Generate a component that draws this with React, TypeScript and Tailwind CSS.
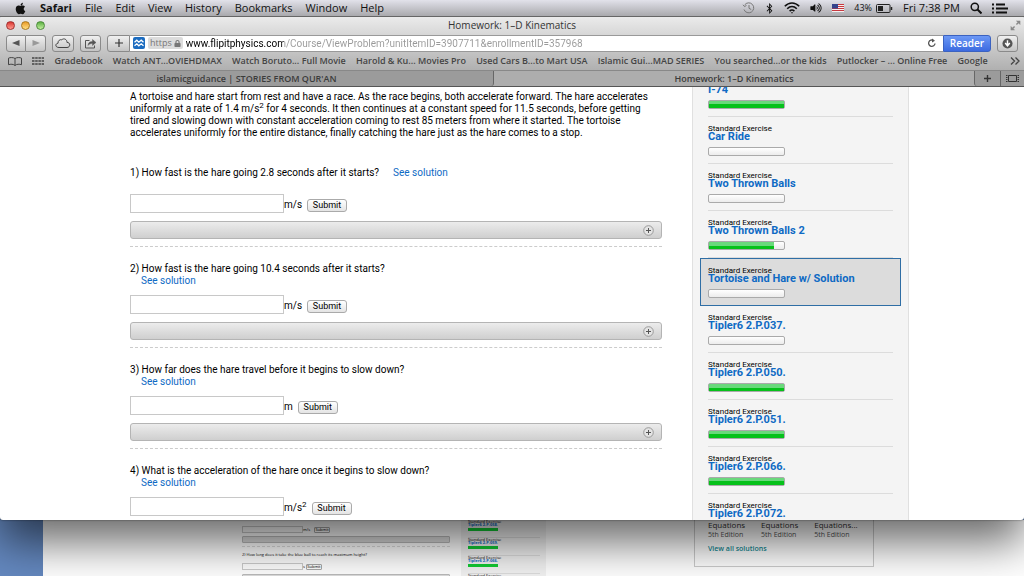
import { useState } from "react";
import type { ReactNode } from "react";
import { FaApple, FaBluetoothB, FaLock, FaVolumeUp } from "react-icons/fa";

const menus = ["File", "Edit", "View", "History", "Bookmarks", "Window", "Help"];

const bookmarks = [
  "Gradebook",
  "Watch ANT...OVIEHDMAX",
  "Watch Boruto... Full Movie",
  "Harold & Ku... Movies Pro",
  "Used Cars B...to Mart USA",
  "Islamic Gui...MAD SERIES",
  "You searched...or the kids",
  "Putlocker – ... Online Free",
  "Google",
];

interface Question {
  text: string;
  unit: ReactNode;
  inline?: boolean;
}

const questions: Question[] = [
  { text: "How fast is the hare going 2.8 seconds after it starts?", unit: "m/s", inline: true },
  { text: "How fast is the hare going 10.4 seconds after it starts?", unit: "m/s" },
  { text: "How far does the hare travel before it begins to slow down?", unit: "m" },
  {
    text: "What is the acceleration of the hare once it begins to slow down?",
    unit: (
      <>
        m/s<sup className="text-[8px]">2</sup>
      </>
    ),
  },
];

const exercises = [
  { title: "I-74", done: 100 },
  { title: "Car Ride", done: 0 },
  { title: "Two Thrown Balls", done: 0 },
  { title: "Two Thrown Balls 2", done: 86 },
  { title: "Tortoise and Hare w/ Solution", done: 0, selected: true },
  { title: "Tipler6 2.P.037.", done: 0 },
  { title: "Tipler6 2.P.050.", done: 100 },
  { title: "Tipler6 2.P.051.", done: 100 },
  { title: "Tipler6 2.P.066.", done: 100 },
  { title: "Tipler6 2.P.072.", done: 100 },
];

function MenuBar() {
  return (
    <header className="relative z-20 flex h-4 shrink-0 items-center justify-between bg-linear-to-b from-[#e2e2ea] to-[#a9a9ad] pr-4 pl-[14px] text-[11px] leading-4 text-[#111] shadow-[0_1px_0_#666]">
      <nav className="flex items-center gap-[13px]">
        <FaApple className="size-[13px]" />
        <span className="font-bold">Safari</span>
        {menus.map((m) => (
          <span key={m}>{m}</span>
        ))}
      </nav>
      <div className="flex items-center gap-[10px]">
        <svg viewBox="0 0 13 12" className="h-3 w-[13px] fill-none stroke-[#777]">
          <path d="M2 7.5A5 5 0 1 0 2.6 3M1 2.8l1.5 1.8 2-1.2M7 3v3.3l2.2 1.2" />
        </svg>
        <FaBluetoothB className="h-[11px] w-[9px]" />
        <svg viewBox="0 0 16 12" className="h-3 w-4 fill-none stroke-[#111] stroke-[1.6]">
          <path d="M.8 4.3C5-.2 11-.2 15.200 4.300M3.200 6.800c3-3 6.600-3 9.600 0M5.600 9.100c1.600-1.500 3.200-1.500 4.800 0" />
          <path d="M8 10.200v1" />
        </svg>
        <FaVolumeUp className="h-[10px] w-3" />
        <svg viewBox="0 0 12 8" className="h-2 w-3">
          <rect width="12" height="8" fill="#f4f0f0" />
          <path d="M0 .5h12M0 2.500h12M0 4.500h12M0 6.500h12" stroke="#c8383f" />
          <rect width="6" height="4.500" fill="#35438c" />
        </svg>
        <span className="flex items-center gap-1 text-[9px]">
          43%
          <svg viewBox="0 0 17 9" className="h-[9px] w-[17px]">
            <rect x=".5" y=".5" width="13.500" height="8" rx="1" fill="none" stroke="#222" />
            <rect x="2" y="2" width="5" height="5" fill="#222" />
            <path d="M15.500 3v3" stroke="#222" strokeWidth="1.500" />
          </svg>
        </span>
        <span>Fri 7:38 PM</span>
        <svg viewBox="0 0 12 12" className="size-3 fill-none stroke-[#111] stroke-[1.5]">
          <circle cx="4.800" cy="4.800" r="3.600" />
          <path d="m7.500 7.500 4 4" strokeWidth="2" />
        </svg>
        <svg viewBox="0 0 16 11" className="h-[11px] w-4 stroke-[#111] stroke-2">
          <path d="M0 1.500h2M4 1.500h9M0 5.500h2M4 5.500h12M0 9.500h2M4 9.500h11" />
        </svg>
      </div>
    </header>
  );
}

function ToolButton({ label, className, children }: { label: string; className: string; children: ReactNode }) {
  return (
    <button
      type="button"
      aria-label={label}
      className={`flex h-[17px] shrink-0 items-center justify-center border border-[#8a8a8a] bg-linear-to-b from-[#f0f0f0] to-[#c4c4c4] ${className}`}
    >
      {children}
    </button>
  );
}

function Toolbar() {
  return (
    <div className="bg-linear-to-b from-[#ececec] to-[#b0b0b0]">
      <div className="relative flex h-[18px] items-center justify-center pt-px text-[10px] text-[#333]">
        <div className="absolute left-1.5 flex gap-1.5">
          <span className="size-[9px] rounded-full border border-[#a03030] bg-linear-to-b from-[#d93030] to-[#ff9a90]" />
          <span className="size-[9px] rounded-full border border-[#a87820] bg-linear-to-b from-[#e89a20] to-[#ffe080]" />
          <span className="size-[9px] rounded-full border border-[#4c8a3c] bg-linear-to-b from-[#58b040] to-[#c4f0a0]" />
        </div>
        Homework: 1–D Kinematics
        <svg viewBox="0 0 12 12" className="absolute right-[3px] size-[11px] fill-[#888] stroke-[#888]">
          <path d="M7 1h4v4zM1 7v4h4z" strokeWidth=".5" />
          <path d="m10 2-3 3M2 10l3-3" strokeWidth="1.500" />
        </svg>
      </div>
      <div className="flex h-[18px] items-center px-1.5">
        <div className="flex">
          <ToolButton label="Back" className="w-5 rounded-l-[3px]">
            <svg viewBox="0 0 8 6" className="h-1.5 w-2 fill-[#555]">
              <path d="M7.500 0v6L0 3z" />
            </svg>
          </ToolButton>
          <ToolButton label="Forward" className="w-5 rounded-r-[3px] border-l-0">
            <svg viewBox="0 0 8 6" className="h-1.5 w-2 fill-[#999]">
              <path d="M.5 0v6L8 3z" />
            </svg>
          </ToolButton>
        </div>
        <ToolButton label="iCloud tabs" className="ml-1.5 w-[22px] rounded-[3px]">
          <svg viewBox="0 0 16 11" className="h-[11px] w-4 fill-none stroke-[#444]">
            <path d="M4 9.500C0 9.500 0 5.500 3 5.300 2.800 2.600 5 1.200 6.800 1.800 9-.3 12.200 1.600 11.900 4.300c4 .2 3.600 5.200.1 5.200z" />
          </svg>
        </ToolButton>
        <ToolButton label="Share" className="mx-1.5 w-[21px] rounded-[3px]">
          <svg viewBox="0 0 13 11" className="h-[11px] w-[13px] fill-none stroke-[#555]">
            <path d="M5.500 2.500h-4v7.500h9V7.500" />
            <path d="M4 7.500c0-2.500 1.500-4 4.500-4v-2l3.500 3-3.500 3v-2c-2 0-3.500.5-4.500 2z" fill="#555" strokeWidth=".4" />
          </svg>
        </ToolButton>
        <ToolButton label="Add bookmark" className="w-[23px] rounded-l-[3px]">
          <svg viewBox="0 0 8 8" className="size-2 stroke-[#333] stroke-[1.2]">
            <path d="M4 0v8M0 4h8" />
          </svg>
        </ToolButton>
        <div className="flex h-[17px] min-w-0 flex-1 items-center border-y border-[#999] bg-white pr-1.5 pl-[3px]">
          <svg viewBox="0 0 12 12" className="size-3 shrink-0">
            <rect width="12" height="12" rx="2" fill="#1c6cc0" />
            <path d="m1.500 5.200 2.300-2 2 2 2.400-2 2.300 2M1.500 8.800l2.300-2 2 2 2.400-2 2.300 2" fill="none" stroke="#fff" strokeWidth="1.300" />
          </svg>
          <span className="ml-[3px] flex h-3 shrink-0 items-center gap-0.5 rounded-xs bg-[#dcdcdc] px-0.5 text-[9px] text-[#777]">
            https <FaLock className="size-[7px]" />
          </span>
          <input
            aria-label="Address"
            defaultValue="www.flipitphysics.com/Course/ViewProblem?unitItemID=3907711&enrollmentID=357968"
            className="ml-[3px] h-[15px] min-w-0 flex-1 bg-linear-to-r from-black from-[98px] to-[#999] to-[98px] bg-clip-text font-['Roboto',sans-serif] text-[10px] text-transparent caret-black outline-none"
          />
          <svg viewBox="0 0 10 10" className="size-[10px] shrink-0 fill-none stroke-[#555] stroke-[1.3]">
            <path d="M8 5.500A3.200 3.200 0 1 1 6.500 2.500" />
            <path d="m5 .5 3 2.200-3 1.800z" fill="#555" stroke="none" />
          </svg>
        </div>
        <button type="button" className="h-[17px] w-12 rounded-r-[3px] border border-[#3b62c0] bg-linear-to-b from-[#6c98f5] to-[#3c6ae0] text-[10px] leading-[15px] font-semibold text-white">
          Reader
        </button>
        <ToolButton label="Downloads" className="ml-1.5 w-[21px] rounded-[3px]">
          <svg viewBox="0 0 12 12" className="size-[11px]">
            <circle cx="6" cy="6" r="5.500" fill="#555" />
            <path d="M6 2.500v5M3.500 5.500 6 8.500l2.500-3" fill="none" stroke="#fff" strokeWidth="1.600" />
          </svg>
        </ToolButton>
      </div>
      <nav className="flex h-[18px] items-center justify-between pr-1 pl-2 text-[9px] font-semibold text-[#444]">
        <svg viewBox="0 0 14 9" className="h-[9px] w-[14px] fill-none stroke-[#444]">
          <path d="M7 8.500V1.500C5.500.3 2 .3.5 1.200v6.500C2.500 7 5.500 7 7 8.500c1.500-1.500 4.500-1.500 6.500-.8V1.200C12 .3 8.500.3 7 1.500" />
        </svg>
        <svg viewBox="0 0 12 8" className="h-2 w-3 stroke-[#444] stroke-[1.5]">
          <path d="M0 1h12M0 4h12M0 7h12" strokeDasharray="2.500 .7" />
        </svg>
        {bookmarks.map((b) => (
          <a key={b} href="#" className="whitespace-nowrap">
            {b}
          </a>
        ))}
        <svg viewBox="0 0 10 8" className="ml-3 h-2 w-[10px] fill-none stroke-[#444] stroke-[1.3]">
          <path d="m1 .5 3.500 3.500L1 7.500M5.500.5 9 4 5.500 7.500" />
        </svg>
      </nav>
    </div>
  );
}

function TabBar() {
  return (
    <div className="flex h-[17px] border-y border-t-[#888] border-b-[#555] bg-[#adadad] text-[9px] leading-[15px] font-semibold text-[#3c3c3c]">
      <button type="button" className="w-[494px] rounded-br-[3px] border-r border-[#666] bg-[#9b9b9b] text-center">
        islamicguidance | STORIES FROM QUR'AN
      </button>
      <button type="button" className="flex-1 text-center">
        Homework: 1–D Kinematics
      </button>
      <button type="button" aria-label="New tab" className="flex w-[26px] items-center justify-center rounded-bl-[3px] border-l border-[#666] bg-[#9b9b9b]">
        <svg viewBox="0 0 7 7" className="size-[7px] stroke-[#333] stroke-[1.4]">
          <path d="M3.500 0v7M0 3.500h7" />
        </svg>
      </button>
      <button type="button" aria-label="Show all tabs" className="flex w-6 items-center justify-center border-l border-[#666] bg-[#9b9b9b]">
        <svg viewBox="0 0 13 7" className="h-[7px] w-[13px] fill-none stroke-[#333]">
          <path d="M2.500.5h8v6h-8zM0 .5h1.500M0 2.500h1.500M0 4.500h1.500M0 6.500h1.500M11.500.5H13M11.500 2.500H13M11.500 4.500H13M11.500 6.500H13" />
        </svg>
      </button>
    </div>
  );
}

function QuestionBlock({ question, index }: { question: Question; index: number }) {
  const [answer, setAnswer] = useState("");
  const id = `answer-${index}`;

  return (
    <form onSubmit={(e) => e.preventDefault()} className="mb-4 border-b border-dashed border-[#ccc] pb-[7px]">
      <div className={question.inline ? "mb-[15px] flex gap-[14px]" : "mb-2"}>
        <label htmlFor={id} className="block">
          {index}) {question.text}
        </label>
        <a href="#" className={question.inline ? "text-[#0e6ac4]" : "ml-[11px] block w-fit text-[#0e6ac4]"}>
          See solution
        </a>
      </div>
      <div className="mb-2 flex h-[19px] items-center">
        <input
          id={id}
          value={answer}
          onChange={(e) => setAnswer(e.target.value)}
          className="h-[19px] w-[154px] border border-[#c8c8c8] bg-white px-1 outline-none"
        />
        <span className="pt-[3px]">{question.unit}</span>
        <button type="submit" className="mt-1 ml-[5px] h-[13px] w-10 rounded-[3px] border border-[#aaa] bg-linear-to-b from-white to-[#e4e4e4] text-[9px] leading-[11px]">
          Submit
        </button>
      </div>
      <div className="flex h-[18px] items-center justify-end rounded-[3px] border border-[#b4b4b4] bg-linear-to-b from-[#ececec] to-[#cfcfcf] pr-[7px]">
        <button type="button" aria-label="Expand help">
          <svg viewBox="0 0 11 11" className="size-[11px] fill-[#e4e4e4] stroke-[#999]">
            <circle cx="5.500" cy="5.500" r="4.800" />
            <path d="M5.500 3v5M3 5.500h5" stroke="#555" />
          </svg>
        </button>
      </div>
    </form>
  );
}

function Progress({ value, label }: { value: number; label: string }) {
  return (
    <div
      role="progressbar"
      aria-label={label}
      aria-valuenow={value}
      className="mt-1.5 h-[9px] w-[77px] rounded-[2px] border border-[#aaa] bg-linear-to-b from-white to-[#ececec]"
    >
      <div className="h-full bg-linear-to-b from-[#6ad97c] from-50% to-[#06c11a] to-50%" style={{ width: `${value}%` }} />
    </div>
  );
}

function Sidebar() {
  return (
    <aside className="w-[217px] shrink-0 border-x border-[#e0e0e0] bg-[#f4f4f4]">
      <ul className="-mt-[17px]">
        {exercises.map((ex) => (
          <li
            key={ex.title}
            className={
              ex.selected
                ? "mx-[7px] h-12 border border-[#2f6ea5] bg-[#dcdcdc] px-[7px] pt-2"
                : "mx-[15px] h-[47px] border-b border-[#dcdcdc] pt-2"
            }
          >
            <p className="text-[8px] leading-[8px] text-black">Standard Exercise</p>
            <a href="#" className="block text-[11px] leading-[8px] font-bold whitespace-nowrap text-[#0e6ac4]">
              {ex.title}
            </a>
            <Progress value={ex.done} label={ex.title} />
          </li>
        ))}
      </ul>
    </aside>
  );
}

// Lower edge of the windows that sit behind the front one
function BackWindows() {
  return (
    <div className="flex h-14 shrink-0 overflow-hidden bg-white">
      <div className="w-[43px] shrink-0 bg-[#6488bf]" />
      <div className="flex flex-1">
        <div className="ml-[199px] w-[208px] pt-1.5 text-[4px] leading-[6px] text-black">
          <div className="flex items-center">
            <span className="h-[7px] w-[61px] border border-[#ccc]" />
            m/s
            <span className="ml-1 h-[6px] w-4 rounded-[1px] border border-[#aaa] text-center leading-[4px]">Submit</span>
          </div>
          <div className="mt-[3px] h-[7px] rounded-[1px] border border-[#bbb] bg-[#ddd]" />
          <div className="mt-[3px] mb-[5px] border-b border-dashed border-[#ddd]" />
          <p className="whitespace-nowrap">2) How long does it take the blue ball to reach its maximum height?</p>
          <div className="mt-[5px] flex items-center">
            <span className="h-[7px] w-[61px] border border-[#ccc]" />
            s
            <span className="ml-px h-[6px] w-4 rounded-[1px] border border-[#aaa] text-center leading-[4px]">Submit</span>
          </div>
          <div className="mt-1 h-[7px] rounded-[1px] border border-[#bbb] bg-[#ddd]" />
        </div>
        <div className="ml-[11px] w-[85px] bg-[#f3f3f3] pl-[7px] text-[4px]">
          {["2.P.058.", "2.P.059.", "2.P.066.", "2.P.072."].map((t) => (
            <div key={t} className="mr-[6px] h-[18px] border-b border-[#ddd] leading-[4px]">
              <p className="leading-[3px] text-black">Standard Exercise</p>
              <p className="font-bold text-[#0e6ac4]">Tipler6 {t}</p>
              <div className="mt-px h-[3px] w-[30px] bg-[#12cc34]" />
            </div>
          ))}
        </div>
        <div className="ml-[148px] h-[47px] w-[180px] border border-t-0 border-[#ccc] px-[13px] text-[7px] leading-[9px] text-[#555]">
          <div className="flex gap-4">
            {["Equations", "Equations", "Equations..."].map((t, i) => (
              <div key={i} className="whitespace-nowrap">
                <p className="text-[8px] leading-[10px] text-[#333]">{t}</p>
                <p>5th Edition</p>
              </div>
            ))}
          </div>
          <a href="#" className="mt-[5px] block font-semibold text-[#138a94]">
            View all solutions
          </a>
        </div>
      </div>
    </div>
  );
}

export default function App() {
  return (
    <div className="flex h-screen flex-col overflow-hidden bg-[#6488bf] font-['Open_Sans',sans-serif]">
      <MenuBar />
      <div className="relative z-10 flex min-h-0 flex-1 flex-col overflow-hidden rounded-[3px] bg-white shadow-[0_22px_45px_rgba(0,0,0,0.6),0_0_2px_rgba(0,0,0,0.6)]">
        <Toolbar />
        <TabBar />
        <div className="flex min-h-0 flex-1 gap-[30px] overflow-hidden pr-[115px] pl-[130px] font-['Roboto',sans-serif]">
          <main className="min-w-0 flex-1 pt-1 text-[10px] leading-[12px] text-black">
            <p className="mb-7 whitespace-nowrap">
              A tortoise and hare start from rest and have a race. As the race begins, both accelerate forward. The hare accelerates
              <br />
              uniformly at a rate of 1.4 m/s<sup className="text-[8px]">2</sup> for 4 seconds. It then continues at a constant speed for 11.5 seconds, before getting
              <br />
              tired and slowing down with constant acceleration coming to rest 85 meters from where it started. The tortoise
              <br />
              accelerates uniformly for the entire distance, finally catching the hare just as the hare comes to a stop.
            </p>
            {questions.map((q, i) => (
              <QuestionBlock key={q.text} question={q} index={i + 1} />
            ))}
          </main>
          <Sidebar />
        </div>
      </div>
      <BackWindows />
    </div>
  );
}
